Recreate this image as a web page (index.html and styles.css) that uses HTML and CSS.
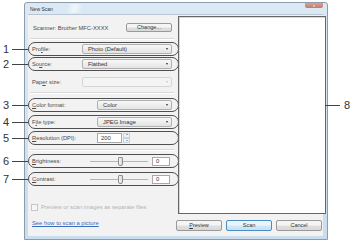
FILE: index.html
```html
<!DOCTYPE html>
<html lang="en">
<head>
    <meta charset="UTF-8">
    <meta name="viewport" content="width=device-width, initial-scale=1.0">
    <title>New Scan</title>
    <link rel="stylesheet" href="styles.css">
</head>
<body>
    <div class="figure">
        <div class="window">
            <div class="titlebar">
                <span class="title">New Scan</span>
                <span class="glass"></span>
                <span class="close">x</span>
            </div>
            <div class="client">
                <div class="settings">
                    <div class="scanner">
                        <span class="label">Scanner: Brother MFC-XXXX</span>
                        <span class="btn change">Change...</span>
                    </div>
                    <div class="sep"></div>

                    <div class="row mark r-profile">
                        <span class="callout">1</span>
                        <span class="label">Pro<u>f</u>ile:</span>
                        <span class="select wide">Photo (Default)</span>
                    </div>
                    <div class="row mark r-source">
                        <span class="callout">2</span>
                        <span class="label">So<u>u</u>rce:</span>
                        <span class="select wide">Flatbed</span>
                    </div>
                    <div class="row r-paper">
                        <span class="label">Pap<u>e</u>r size:</span>
                        <span class="select wide disabled"></span>
                    </div>
                    <div class="sep"></div>

                    <div class="row mark r-color">
                        <span class="callout">3</span>
                        <span class="label"><u>C</u>olor format:</span>
                        <span class="select narrow">Color</span>
                    </div>
                    <div class="row mark r-type">
                        <span class="callout">4</span>
                        <span class="label">F<u>i</u>le type:</span>
                        <span class="select narrow">JPEG Image</span>
                    </div>
                    <div class="row mark r-res">
                        <span class="callout">5</span>
                        <span class="label"><u>R</u>esolution (DPI):</span>
                        <span class="field narrow">
                            <span class="input">200</span>
                            <span class="spin"><i class="up"></i><i class="down"></i></span>
                        </span>
                    </div>
                    <div class="sep"></div>

                    <div class="row mark r-bright">
                        <span class="callout">6</span>
                        <span class="label"><u>B</u>rightness:</span>
                        <span class="field slider">
                            <span class="track"><i class="thumb"></i></span>
                            <span class="input value">0</span>
                        </span>
                    </div>
                    <div class="row mark r-contrast">
                        <span class="callout">7</span>
                        <span class="label"><u>C</u>ontrast:</span>
                        <span class="field slider">
                            <span class="track"><i class="thumb"></i></span>
                            <span class="input value">0</span>
                        </span>
                    </div>

                    <div class="check">
                        <span class="box"></span>
                        <span>Preview or scan images as separate files</span>
                    </div>
                    <a class="link" href="#">See how to scan a picture</a>
                </div>

                <div class="side">
                    <div class="preview">
                        <span class="callout-right">8</span>
                    </div>
                    <div class="buttons">
                        <span class="btn"><u>P</u>review</span>
                        <span class="btn default">Scan</span>
                        <span class="btn">Cancel</span>
                    </div>
                </div>
            </div>
        </div>
    </div>
</body>
</html>
```

FILE: styles.css
```css
body {
    margin: 0;
    background: #fff;
    font-family: "Liberation Sans", Arial, sans-serif;
}
.figure {
    width: 350px;
    height: 242px;
    padding: 2px 0 0 24px;
    box-sizing: border-box;
}
.window {
    width: 304px;
    height: 238px;
    box-sizing: border-box;
    border: 1px solid #8d9cab;
    border-radius: 3px 3px 0 0;
    background: linear-gradient(#dbe9f5, #c9ddef);
    padding: 0 4px 3px 3px;
    display: flex;
    flex-direction: column;
}
.titlebar {
    height: 11px;
    display: flex;
    align-items: flex-start;
}
.title {
    font-size: 5px;
    color: #333;
    margin: 3px 0 0 2px;
}
.glass {
    width: 30px;
    height: 9px;
    margin: 1px 0 0 8px;
    background: linear-gradient(100deg, transparent 20%, rgba(255,255,255,0.6) 45%, transparent 70%);
}
.close {
    margin-left: auto;
    width: 18px;
    height: 5px;
    border-radius: 0 0 2px 2px;
    background: linear-gradient(#d9a195, #c47a6b);
    color: #fff;
    font-size: 4px;
    line-height: 5px;
    text-align: center;
}
.client {
    flex: 1;
    display: flex;
    background: #f2f2f2;
    border-top: 1px solid #b9c6d3;
}

/* left column */
.settings {
    width: 148px;
    display: flex;
    flex-direction: column;
    font-size: 5.8px;
    color: #4a4a4a;
}
.scanner {
    display: flex;
    align-items: center;
    height: 11px;
    margin: 7px 0 0 5px;
    padding-right: 4px;
    justify-content: space-between;
}
.sep {
    height: 1px;
    margin: 5px 2px 0 2px;
    background: #d8d8d8;
    border-bottom: 1px solid #fff;
}
.row {
    width: 151px;
    height: 14px;
    box-sizing: border-box;
    padding: 0 6px 0 3px;
    display: flex;
    align-items: center;
    justify-content: space-between;
    position: relative;
    border: 1px solid transparent;
}
.mark {
    border-color: #4f4f4f;
    border-radius: 7px;
}
.r-profile { margin-top: 2px; }
.r-source { margin-top: 1px; }
.r-paper { margin-top: 5px; height: 12px; }
.sep + .r-color { margin-top: 4px; }
.r-type { margin-top: 3px; }
.r-res { margin-top: 2px; }
.sep + .r-bright { margin-top: 3px; }
.r-contrast { margin-top: 4px; }
.r-paper + .sep { margin-top: 4px; }
.r-res + .sep { margin-top: 4px; }

.callout {
    position: absolute;
    left: -26px;
    top: 0;
    font-size: 11px;
    line-height: 12px;
    color: #333;
}
.callout::after {
    content: "";
    position: absolute;
    left: 9px;
    top: 6px;
    width: 16px;
    height: 1px;
    background: #444;
}

.select {
    height: 10px;
    box-sizing: border-box;
    border: 1px solid #b0b0b0;
    border-radius: 2px;
    background: linear-gradient(#f8f8f8, #e3e3e3);
    padding-left: 5px;
    line-height: 8px;
    color: #333;
    position: relative;
}
.select::after {
    content: "";
    position: absolute;
    right: 3px;
    top: 3px;
    border: 1.5px solid transparent;
    border-top: 2px solid #333;
}
.select.disabled {
    background: #f4f4f4;
    border-color: #d6d6d6;
}
.select.disabled::after {
    border-top-color: #c2c2c2;
}
.wide { width: 90px; }
.narrow { width: 75px; }

.field {
    display: flex;
    align-items: center;
    height: 10px;
}
.input {
    height: 10px;
    box-sizing: border-box;
    border: 1px solid #a9a9a9;
    background: #fff;
    padding-left: 3px;
    line-height: 8px;
    color: #333;
}
.r-res .input { width: 25px; }
.spin {
    width: 7px;
    height: 10px;
    margin-left: 1px;
    display: flex;
    flex-direction: column;
}
.spin i {
    flex: 1;
    border: 1px solid #c7d3de;
    background: #eef3f8;
    position: relative;
}
.spin i::after {
    content: "";
    position: absolute;
    left: 1.5px;
    border: 1px solid transparent;
}
.spin .up::after { border-bottom: 1.5px solid #4a6c8c; top: -1px; }
.spin .down::after { border-top: 1.5px solid #4a6c8c; top: 0.5px; }

.slider {
    width: 80px;
    margin-right: 2px;
}
.track {
    flex: 1;
    height: 1px;
    background: #b5b5b5;
    position: relative;
    margin-right: 4px;
}
.thumb {
    position: absolute;
    left: 28px;
    top: -4px;
    width: 5px;
    height: 9px;
    box-sizing: border-box;
    border: 1px solid #8e8e8e;
    border-radius: 1px 1px 2px 2px;
    background: linear-gradient(90deg, #f4f4f4, #d9d9d9);
}
.value {
    width: 18px;
    height: 9px;
    line-height: 7px;
}

.check {
    display: flex;
    align-items: center;
    margin: 16px 0 0 3px;
    height: 10px;
    color: #b3b3b3;
}
.box {
    width: 5px;
    height: 5px;
    border: 1px solid #c6c6c6;
    background: #f6f6f6;
    margin-right: 3px;
}
.link {
    margin: 6px 0 0 4px;
    color: #3b6dbf;
    line-height: 10px;
}

/* right column */
.side {
    flex: 1;
    display: flex;
    flex-direction: column;
}
.preview {
    margin: 1px 1px 0 2px;
    height: 198px;
    box-sizing: border-box;
    border: 1px solid #666;
    box-shadow: inset 1px 1px 0 #d9d9d9;
    background: #fff;
    position: relative;
}
.callout-right {
    position: absolute;
    left: calc(100% + 19px);
    top: 82px;
    font-size: 11px;
    line-height: 12px;
    color: #333;
}
.callout-right::before {
    content: "";
    position: absolute;
    left: -19px;
    top: 6px;
    width: 15px;
    height: 1px;
    background: #444;
}
.buttons {
    display: flex;
    justify-content: flex-end;
    gap: 4px;
    margin-top: 6px;
    padding-right: 5px;
}
.btn {
    width: 46px;
    height: 11px;
    box-sizing: border-box;
    border: 1px solid #9a9a9a;
    border-radius: 2px;
    background: linear-gradient(#f5f5f5 45%, #e0e0e0 55%, #d8d8d8);
    font-size: 5.5px;
    line-height: 9px;
    text-align: center;
    color: #333;
}
.btn.default {
    border-color: #4a8cc4;
    background: linear-gradient(#eaf5fd 45%, #d3e8f8 55%, #c6e0f5);
}
.change {
    width: 46px;
    height: 9px;
    line-height: 7px;
}
```
